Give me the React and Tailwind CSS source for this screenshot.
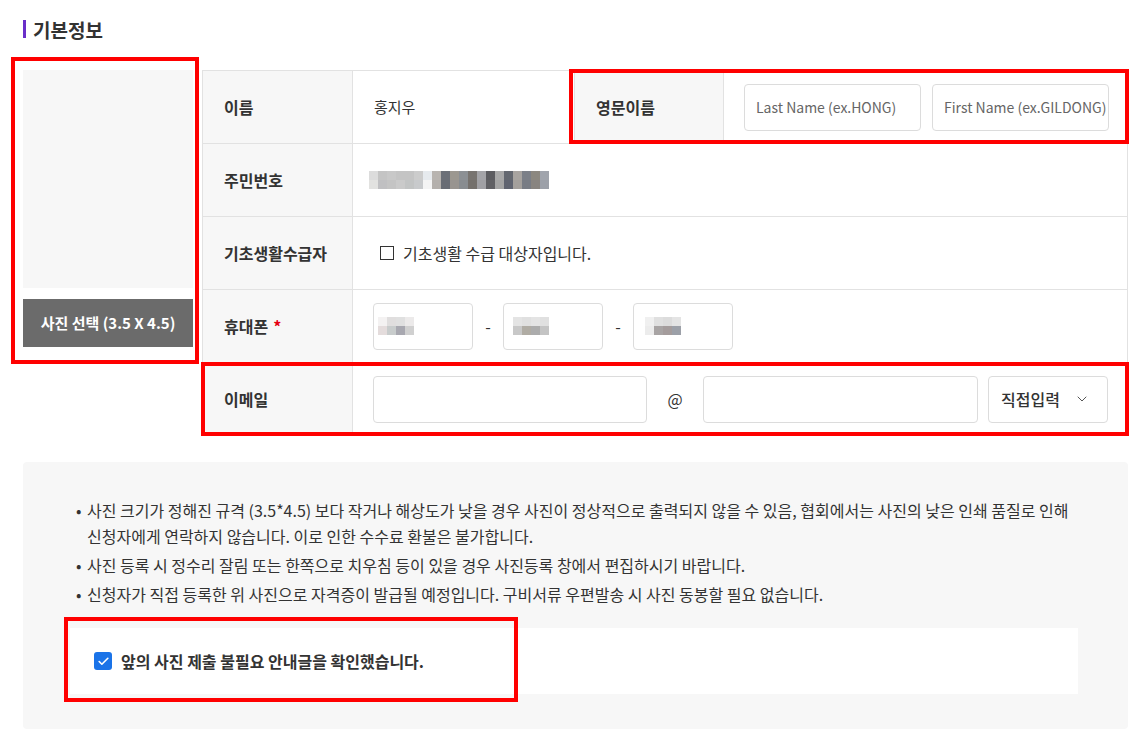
import { ChevronDown, Check } from "lucide-react"

const ssnTop = ['#dcdcdc', '#c4c4c4', '#c8c8c8', '#c4c4c4', '#c4c4c4', '#cccccc', '#e6eaee', '#b8b4b0', '#6c7078', '#9c9890', '#8c9094', '#787470', '#a4a4a8', '#5c5c60', '#a8a8a8', '#646870', '#a8a4a0', '#7c8088', '#8c8880', '#a0a4ac']
const ssnBottom = ['#e2e2e0', '#c0c0c2', '#c4c4c4', '#cacaca', '#c2c4c4', '#c8cacc', '#f4f4f4', '#b4b0ac', '#686c74', '#989490', '#888c90', '#74706c', '#a0a0a4', '#606064', '#a4a4a4', '#606470', '#a4a09c', '#787c84', '#888480', '#9ca0a8']

const phoneBlur = [
    [['#f4f2f2', '#e0dede', '#e0e0e0', '#eceaea'], ['#e4dcdc', '#c8cccc', '#a8a8b0', '#d0d0d0']],
    [['#e4e4e4', '#e0e0e0', '#e4e4e4', '#e0e0e0'], ['#c8c8c8', '#b0aca4', '#acacac', '#c4c4c4']],
    [['#f0f0f0', '#e0e0e0', '#dcdcdc', '#e4e4e4'], ['#ececec', '#a8a4a4', '#a49c9c', '#9ca0a8']],
]

function Blur({ rows }) {
    return (
        <div className="flex flex-col">
            {rows.map((row, i) => (
                <div key={i} className="flex">
                    {row.map((c, j) => (
                        <div key={j} className="w-[9px] h-[9px]" style={{ backgroundColor: c }} />
                    ))}
                </div>
            ))}
        </div>
    )
}

function Label({ children, className = "" }) {
    return (
        <div className={`w-[150px] shrink-0 bg-[#f7f7f7] border-r border-[#e2e2e2] flex items-center pl-[21px] font-semibold text-[16px] text-[#333] ${className}`}>
            {children}
        </div>
    )
}

function Box({ className = "", children }) {
    return (
        <div className={`h-[47px] border border-[#dcdcdc] rounded-[4px] bg-white flex items-center shrink-0 ${className}`}>
            {children}
        </div>
    )
}

export default function App() {
    return (
        <div className="relative w-[1140px] h-[741px] bg-white text-[16px] text-[#333]" style={{ fontFamily: '"Noto Sans CJK KR", "Noto Sans", sans-serif' }}>
            <div className="pt-[18px] pl-[23px]">
                {/* 제목 */}
                <div className="flex items-center h-[22px]">
                    <span className="w-[3px] h-[18px] bg-[#6a2fc9]" />
                    <h2 className="ml-[7px] text-[19px] font-bold text-[#333] leading-none">기본정보</h2>
                </div>

                <div className="flex mt-[30px]">
                    {/* 사진 */}
                    <div className="w-[170px] shrink-0">
                        <div className="h-[218px] bg-[#f7f7f7]" />
                        <button className="mt-[11px] w-full h-[48px] bg-[#6b6b6b] text-white text-[15px] font-semibold">사진 선택 (3.5 X 4.5)</button>
                    </div>

                    {/* 테이블 */}
                    <div className="ml-[9px] w-[926px] shrink-0 border-t border-x border-[#e2e2e2]">
                        <div className="flex h-[73px] border-b border-[#e2e2e2]">
                            <Label>이름</Label>
                            <div className="w-[221px] flex items-center pl-[21px] text-[15px]">홍지우</div>
                            <Label className="border-l w-[149px] pl-[20px]">영문이름</Label>
                            <div className="flex-1 flex items-center pl-[20px] gap-[11px]">
                                <Box className="w-[177px] px-[11px] text-[14px] text-[#666]">Last Name (ex.HONG)</Box>
                                <Box className="w-[177px] pl-[11px] text-[14px] text-[#666] overflow-hidden whitespace-nowrap">First Name (ex.GILDONG)</Box>
                            </div>
                        </div>
                        <div className="flex h-[73px] border-b border-[#e2e2e2]">
                            <Label>주민번호</Label>
                            <div className="flex items-center pl-[16px]">
                                <Blur rows={[ssnTop, ssnBottom]} />
                            </div>
                        </div>
                        <div className="flex h-[73px] border-b border-[#e2e2e2]">
                            <Label>기초생활수급자</Label>
                            <label className="flex items-center pl-[27px] gap-[9px]">
                                <span className="w-[14px] h-[14px] border-[1.5px] border-[#333] bg-white" />
                                <span>기초생활 수급 대상자입니다.</span>
                            </label>
                        </div>
                        <div className="flex h-[73px] border-b border-[#e2e2e2]">
                            <Label>휴대폰 <span className="ml-[5px] text-[#e60012]">*</span></Label>
                            <div className="flex items-center pl-[20px]">
                                <Box className="w-[100px] pl-[4px]"><Blur rows={phoneBlur[0]} /></Box>
                                <span className="w-[30px] text-center">-</span>
                                <Box className="w-[100px] pl-[9px]"><Blur rows={phoneBlur[1]} /></Box>
                                <span className="w-[30px] text-center">-</span>
                                <Box className="w-[100px] pl-[11px]"><Blur rows={phoneBlur[2]} /></Box>
                            </div>
                        </div>
                        <div className="flex h-[73px] border-b border-[#e2e2e2]">
                            <Label>이메일</Label>
                            <div className="flex items-center pl-[20px]">
                                <Box className="w-[274px]" />
                                <span className="w-[56px] text-center">@</span>
                                <Box className="w-[275px]" />
                                <Box className="ml-[10px] w-[120px] pl-[12px] pr-[17px] justify-between font-medium">
                                    <span>직접입력</span>
                                    <ChevronDown size={16} strokeWidth={1.5} className="text-[#555]" />
                                </Box>
                            </div>
                        </div>
                    </div>
                </div>

                {/* 안내 */}
                <div className="mt-[26px] w-[1105px] h-[267px] bg-[#f7f7f7] rounded-[4px] pt-[35px] pl-[47px] pr-[50px]">
                    <ul className="pl-[6px] flex flex-col gap-[3px] leading-[26px] text-[16px]">
                        <li className="flex">
                            <span className="w-[11px] shrink-0">•</span>
                            <span>사진 크기가 정해진 규격 (3.5*4.5) 보다 작거나 해상도가 낮을 경우 사진이 정상적으로 출력되지 않을 수 있음, 협회에서는 사진의 낮은 인쇄 품질로 인해 신청자에게 연락하지 않습니다. 이로 인한 수수료 환불은 불가합니다.</span>
                        </li>
                        <li className="flex">
                            <span className="w-[11px] shrink-0">•</span>
                            <span>사진 등록 시 정수리 잘림 또는 한쪽으로 치우침 등이 있을 경우 사진등록 창에서 편집하시기 바랍니다.</span>
                        </li>
                        <li className="flex">
                            <span className="w-[11px] shrink-0">•</span>
                            <span>신청자가 직접 등록한 위 사진으로 자격증이 발급될 예정입니다. 구비서류 우편발송 시 사진 동봉할 필요 없습니다.</span>
                        </li>
                    </ul>
                    <div className="mt-[21px] h-[66px] bg-white flex items-center pl-[24px] gap-[9px]">
                        <span className="w-[18px] h-[18px] rounded-[3px] bg-[#1a73e8] flex items-center justify-center">
                            <Check size={13} strokeWidth={3} className="text-white" />
                        </span>
                        <span className="font-bold text-[16px]">앞의 사진 제출 불필요 안내글을 확인했습니다.</span>
                    </div>
                </div>
            </div>

            {/* 표시 박스 */}
            <div className="absolute left-[11px] top-[57px] w-[188px] h-[307px] border-4 border-[#ff0000] pointer-events-none" />
            <div className="absolute left-[569px] top-[69px] w-[560px] h-[75px] border-4 border-[#ff0000] pointer-events-none" />
            <div className="absolute left-[201px] top-[362px] w-[928px] h-[74px] border-4 border-[#ff0000] pointer-events-none" />
            <div className="absolute left-[64px] top-[617px] w-[454px] h-[85px] border-4 border-[#ff0000] pointer-events-none" />
        </div>
    )
}
